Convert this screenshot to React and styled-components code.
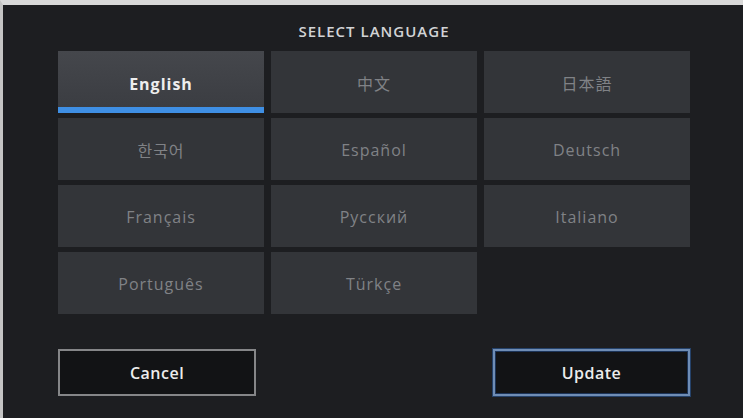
import React from "react";
import styled, { createGlobalStyle } from "styled-components";

const GlobalStyle = createGlobalStyle`
  html, body {
    margin: 0;
    padding: 0;
    background: #1d1e21;
  }
  * {
    box-sizing: border-box;
  }
`;

const Screen = styled.div`
  width: 743px;
  height: 418px;
  background: #1d1e21;
  border-top: 5px solid #d9d9d9;
  border-left: 3px solid #c4c4c4;
  padding: 0 53px 0 55px;
  font-family: "Open Sans", "Noto Sans CJK SC", sans-serif;
  display: flex;
  flex-direction: column;
`;

const Header = styled.div`
  height: 46px;
  padding-top: 6px;
  display: flex;
  align-items: center;
  justify-content: center;
  color: #d2d3d5;
  font-size: 15px;
  font-weight: 600;
  letter-spacing: 1px;
  text-transform: uppercase;
`;

const Grid = styled.div`
  display: grid;
  grid-template-columns: repeat(3, 206px);
  grid-auto-rows: 62px;
  column-gap: 7px;
  row-gap: 5px;
`;

const Tile = styled.div`
  display: flex;
  align-items: center;
  justify-content: center;
  padding-top: ${(p) => (p.$active ? "4px" : "2px")};
  background: ${(p) =>
    p.$active ? "linear-gradient(180deg, #45474c 0%, #3a3c41 100%)" : "#333539"};
  box-shadow: ${(p) => (p.$active ? "inset 0 -6px 0 #3f8fe4" : "none")};
  color: ${(p) => (p.$active ? "#eeeeee" : "#808286")};
  font-size: 16px;
  font-weight: ${(p) => (p.$active ? 700 : 400)};
  letter-spacing: 1px;
`;

const Footer = styled.div`
  margin-top: 35px;
  display: flex;
  justify-content: space-between;
`;

const Button = styled.button`
  height: 47px;
  width: ${(p) => p.$width}px;
  background: #121315;
  color: #ececec;
  font-family: "Open Sans", sans-serif;
  font-size: 16px;
  font-weight: 600;
  letter-spacing: 0.5px;
  border: 2px solid ${(p) => (p.$primary ? "#6f8db5" : "#858688")};
  box-shadow: ${(p) => (p.$primary ? "0 0 0 1px #25426a, inset 0 0 0 1px #1c3458" : "none")};
  cursor: pointer;
`;

const languages = [
  "English",
  "中文",
  "日本語",
  "한국어",
  "Español",
  "Deutsch",
  "Français",
  "Русский",
  "Italiano",
  "Português",
  "Türkçe",
];

export default function App() {
  return (
    <>
      <GlobalStyle />
      <Screen>
        <Header>Select Language</Header>
        <Grid>
          {languages.map((lang, i) => (
            <Tile key={lang} $active={i === 0}>
              {lang}
            </Tile>
          ))}
        </Grid>
        <Footer>
          <Button $width={198}>Cancel</Button>
          <Button $width={197} $primary>
            Update
          </Button>
        </Footer>
      </Screen>
    </>
  );
}
